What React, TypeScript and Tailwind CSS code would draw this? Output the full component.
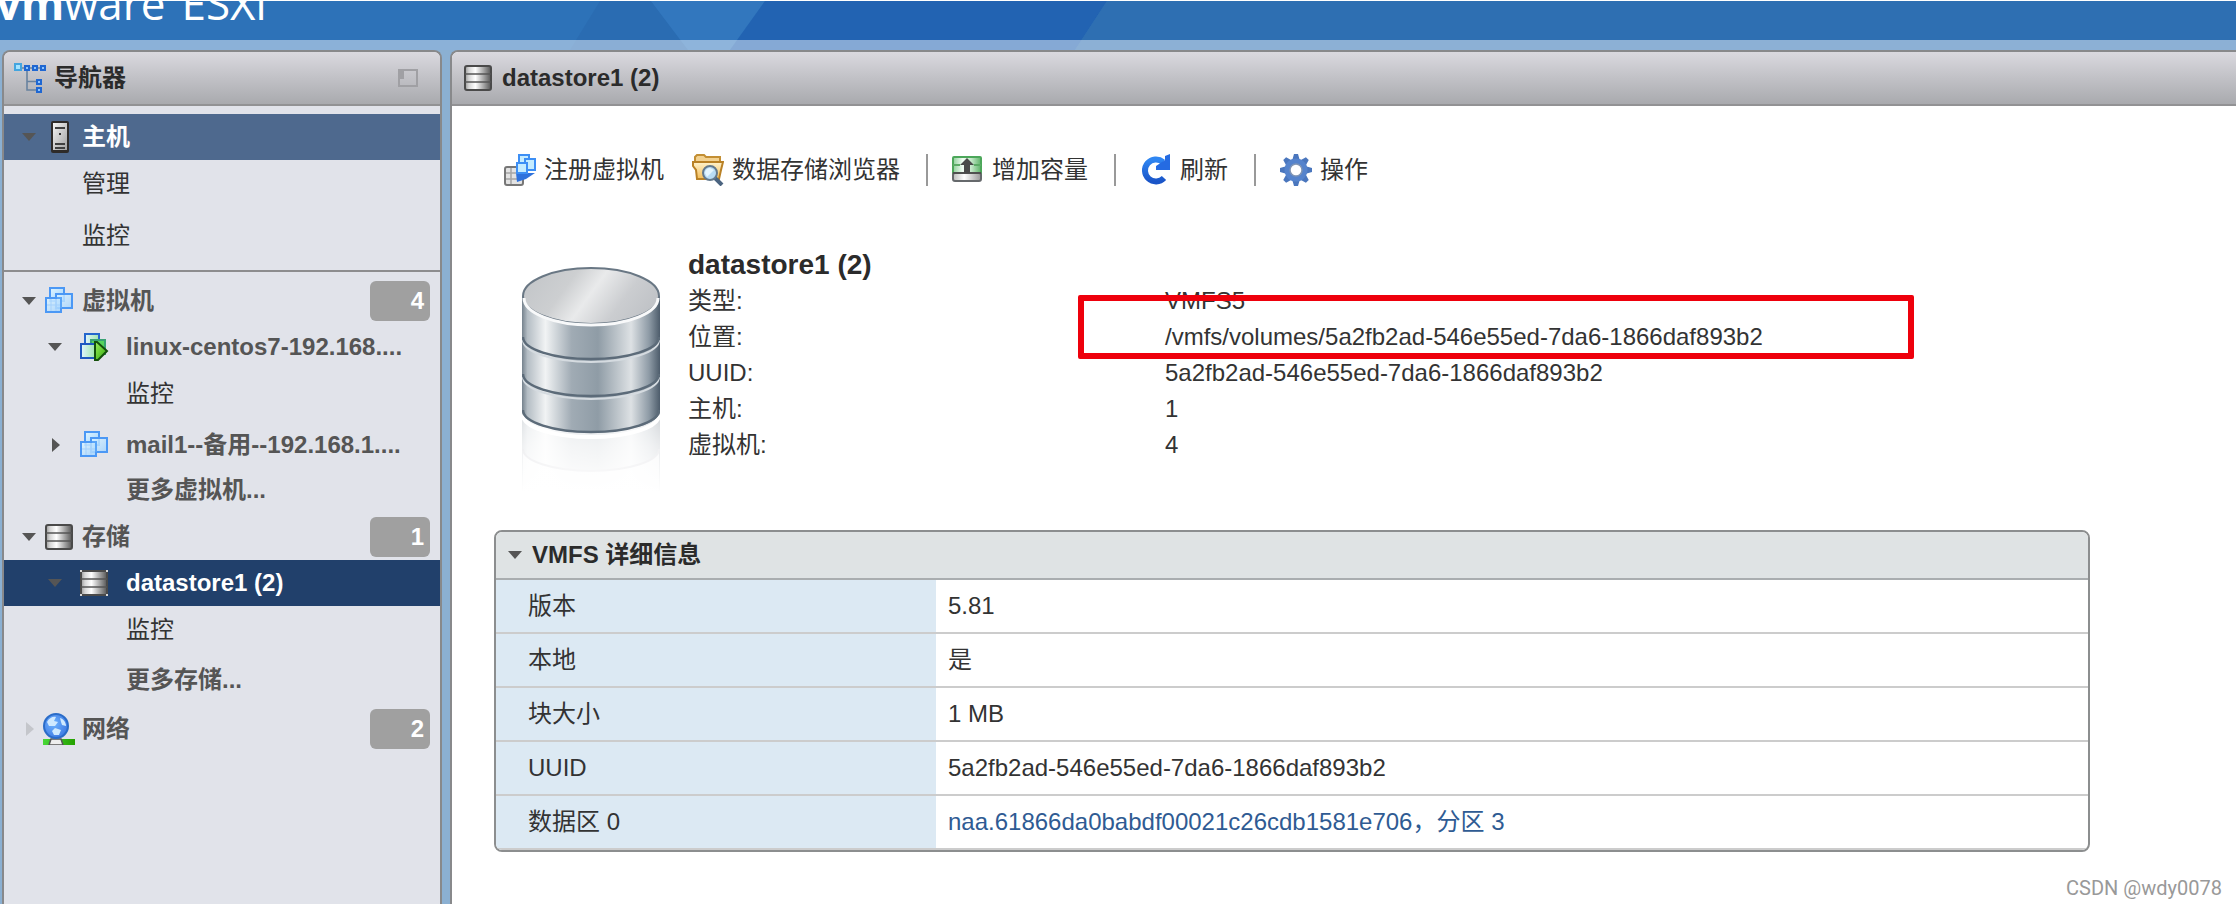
import type { ReactNode } from "react";
import clsx from "clsx";

type IconProps = { className?: string };

function ArrowDown({ className }: IconProps) {
  return (
    <svg viewBox="0 0 14 8" className={clsx("h-2 w-3.5 shrink-0", className)} aria-hidden="true">
      <path d="M0 0H14L7 8Z" fill="currentColor" />
    </svg>
  );
}

function ArrowRight({ className }: IconProps) {
  return (
    <svg viewBox="0 0 14 14" className={clsx("size-3.5 shrink-0", className)} aria-hidden="true">
      <path d="M4 0L12 7L4 14Z" fill="currentColor" />
    </svg>
  );
}

function NavigatorIcon() {
  return (
    <svg viewBox="0 0 32 30" className="h-[30px] w-8" fill="none" aria-hidden="true">
      <path d="M13 7V27H22M13 18.5H22M8 5H28" stroke="#68829f" strokeWidth="1.6" />
      <rect x="1" y="1" width="6" height="6" fill="#a5e4ff" stroke="#43a5df" strokeWidth="2" />
      <g fill="#8cc4ff" stroke="#1f67d2" strokeWidth="2">
        <rect x="11" y="3" width="4" height="4" />
        <rect x="19" y="3" width="4" height="4" />
        <rect x="27" y="3" width="4" height="4" />
        <rect x="23" y="17" width="4" height="4" />
        <rect x="23" y="25" width="4" height="4" />
      </g>
    </svg>
  );
}

function HostIcon() {
  return (
    <svg viewBox="0 0 32 32" className="size-8" aria-hidden="true">
      <defs>
        <linearGradient id="host" x1="0" x2="1" y1="0" y2="1">
          <stop offset="0" stopColor="#f4f4f4" />
          <stop offset="1" stopColor="#a2a2a2" />
        </linearGradient>
      </defs>
      <rect x="8" y="0" width="18" height="32" rx="2" fill="#2e2b29" />
      <rect x="10" y="2" width="14" height="27" fill="url(#host)" />
      <path d="M12 7H22M12 23H22M12 27H22" stroke="#3f3f3f" strokeWidth="2" />
      <rect x="16" y="12" width="2" height="2" fill="#333" />
    </svg>
  );
}

function VmIcon() {
  return (
    <svg viewBox="0 0 32 32" className="size-8" aria-hidden="true">
      <defs>
        <linearGradient id="vm" x1="0" x2="1" y1="0" y2="1">
          <stop offset="0" stopColor="#dff5ff" />
          <stop offset="1" stopColor="#9fd2ff" />
        </linearGradient>
      </defs>
      <g fill="url(#vm)" stroke="#4b98f5" strokeWidth="2">
        <rect x="7" y="3" width="14" height="13" />
        <rect x="13" y="9" width="16" height="14" fillOpacity="0.8" />
        <rect x="3" y="13" width="15" height="14" fillOpacity="0.85" />
      </g>
      <path d="M14 13H18V23" stroke="#5aa5f8" strokeWidth="2" fill="none" />
      <path d="M8 14V26M13 14V26M4 20H17" stroke="#a3d0fb" strokeWidth="1" fill="none" />
    </svg>
  );
}

function VmRunningIcon() {
  return (
    <svg viewBox="0 0 32 32" className="size-8" aria-hidden="true">
      <defs>
        <linearGradient id="vm-on" x1="0" x2="1">
          <stop offset="0" stopColor="#e2f4ff" />
          <stop offset="1" stopColor="#9fe6ac" />
        </linearGradient>
        <linearGradient id="vm-play" x1="0" x2="1" y1="0" y2="1">
          <stop offset="0" stopColor="#9cf05a" />
          <stop offset="1" stopColor="#2fa80c" />
        </linearGradient>
      </defs>
      <rect x="7" y="3" width="14" height="14" fill="url(#vm-on)" stroke="#2466cd" strokeWidth="2" />
      <rect x="13" y="9" width="14" height="14" fill="#55d35c" stroke="#38a273" strokeWidth="2" />
      <rect x="3" y="13" width="14" height="14" fill="url(#vm-on)" stroke="#1f58c0" strokeWidth="2" />
      <path d="M17 11H19L29 20L20 29H17Z" fill="url(#vm-play)" stroke="#14500c" strokeWidth="2" />
    </svg>
  );
}

function StorageIcon({ light }: { light?: boolean }) {
  return (
    <svg viewBox="0 0 32 32" className="size-8" aria-hidden="true">
      <defs>
        <linearGradient id="disk" x1="0" x2="1">
          <stop offset="0" stopColor="#999" />
          <stop offset="0.15" stopColor="#d5d5d5" />
          <stop offset="0.4" stopColor="#fff" />
          <stop offset="0.7" stopColor="#aaa" />
          <stop offset="1" stopColor="#555" />
        </linearGradient>
      </defs>
      <rect x="3" y="4" width="26" height="24" rx={light ? 0 : 2} fill="url(#disk)" stroke="#4a4a4a" strokeWidth="2" />
      <path d="M3 12H29M3 20H29" stroke="#555" strokeWidth="1.6" />
      {light && (
        <g fill="#d8d8d8">
          <rect x="2" y="3" width="2" height="2" />
          <rect x="28" y="3" width="2" height="2" />
          <rect x="2" y="27" width="2" height="2" />
          <rect x="28" y="27" width="2" height="2" />
        </g>
      )}
    </svg>
  );
}

function NetworkIcon() {
  return (
    <svg viewBox="0 0 32 32" className="size-8" aria-hidden="true">
      <defs>
        <radialGradient id="globe" cx="0.4" cy="0.4" r="0.7">
          <stop offset="0" stopColor="#6fb4ff" />
          <stop offset="1" stopColor="#3a74e0" />
        </radialGradient>
        <linearGradient id="cable" x1="0" x2="1">
          <stop offset="0" stopColor="#48d838" />
          <stop offset="1" stopColor="#25a000" />
        </linearGradient>
      </defs>
      <rect x="0" y="26" width="32" height="6" fill="url(#cable)" />
      <path d="M6 32L8 26H18L20 32Z" fill="#eee" stroke="#555" strokeWidth="1.5" />
      <circle cx="13" cy="13" r="12" fill="url(#globe)" stroke="#2a6cc8" strokeWidth="2" />
      <path d="M4 9C6 5 10 3 13 4L11 8L15 9L12 13L6 13ZM17 5C21 6 23 10 23 13L19 12L18 9ZM12 15L18 17L16 22L11 22L9 18Z" fill="#cfe9ff" />
    </svg>
  );
}

function RegisterVmIcon() {
  return (
    <svg viewBox="0 0 32 32" className="size-8" aria-hidden="true">
      <rect x="1" y="13" width="18" height="18" rx="2" fill="#e3e3e3" stroke="#777" strokeWidth="2" />
      <path d="M2 19H18M2 25H18M7 14V30" stroke="#a5a5a5" strokeWidth="1.5" />
      <path d="M12 19H31L22 25L13 28Z" fill="#2f72dc" />
      <g fill="#c5ecff" stroke="#3d8ff5" strokeWidth="2">
        <rect x="15" y="1" width="10" height="9" />
        <rect x="21" y="5" width="10" height="11" />
        <rect x="13" y="9" width="10" height="10" />
      </g>
    </svg>
  );
}

function BrowserIcon() {
  return (
    <svg viewBox="0 0 32 32" className="size-8" aria-hidden="true">
      <defs>
        <linearGradient id="folder" x1="0" x2="0" y1="0" y2="1">
          <stop offset="0" stopColor="#fff3cd" />
          <stop offset="1" stopColor="#f4bd58" />
        </linearGradient>
      </defs>
      <path d="M3 9V3L5 1H12L14 3H28V9" fill="#f3d291" stroke="#c38f34" strokeWidth="2" />
      <path d="M1 8H31L29 16L27 25H5L4 16L1 12Z" fill="url(#folder)" stroke="#b98126" strokeWidth="2" />
      <path d="M23 24L30 31" stroke="#4b6480" strokeWidth="4" />
      <circle cx="18" cy="19" r="7" fill="#b9dcf5" stroke="#64798c" strokeWidth="2" />
      <path d="M13 19A5 5 0 0 1 18 14L22 16L15 23Z" fill="#e4f5ff" />
    </svg>
  );
}

function IncreaseIcon() {
  return (
    <svg viewBox="0 0 32 32" className="size-8" aria-hidden="true">
      <defs>
        <linearGradient id="inc" x1="0" x2="1">
          <stop offset="0" stopColor="#8fd09a" />
          <stop offset="0.35" stopColor="#f2fcf4" />
          <stop offset="0.65" stopColor="#c5e8ca" />
          <stop offset="1" stopColor="#5db468" />
        </linearGradient>
        <linearGradient id="inc-base" x1="0" x2="1">
          <stop offset="0" stopColor="#bbb" />
          <stop offset="0.4" stopColor="#fff" />
          <stop offset="1" stopColor="#999" />
        </linearGradient>
      </defs>
      <rect x="1" y="3" width="28" height="18" rx="1" fill="url(#inc)" stroke="#4ca75a" strokeWidth="2" />
      <path d="M1 11H8M22 11H29" stroke="#5cab66" strokeWidth="2" />
      <rect x="1" y="19" width="28" height="8" rx="2" fill="url(#inc-base)" stroke="#66696c" strokeWidth="2" />
      <path d="M1 19H29" stroke="#505050" strokeWidth="2" />
      <path d="M15 4L22 11H18V19H12V11H8Z" fill="#4a4a4a" />
    </svg>
  );
}

function RefreshIcon() {
  return (
    <svg viewBox="0 0 32 32" className="size-8" fill="none" aria-hidden="true">
      <defs>
        <linearGradient id="refresh" x1="0" x2="0" y1="0" y2="1">
          <stop offset="0" stopColor="#2f86f2" />
          <stop offset="1" stopColor="#1a55c8" />
        </linearGradient>
      </defs>
      <path d="M24 24A11 11 0 1 1 23 8" stroke="url(#refresh)" strokeWidth="6" />
      <path d="M30 0V16H16V12L25 6V2Z" fill="#256be2" />
    </svg>
  );
}

const teeth = [0, 45, 90, 135, 180, 225, 270, 315];

function GearIcon() {
  return (
    <svg viewBox="0 0 32 32" className="size-8" aria-hidden="true">
      <g fill="#4a76bd">
        {teeth.map((deg) => (
          <path key={deg} d="M12 7L14 0H18L20 7Z" transform={`rotate(${deg} 16 16)`} />
        ))}
      </g>
      <circle cx="16" cy="16" r="8.5" fill="#fff" stroke="#5583cc" strokeWidth="6" />
      <circle cx="16" cy="16" r="6" fill="#fff" stroke="#8095b5" strokeWidth="1.5" />
    </svg>
  );
}

function DatastoreArt() {
  return (
    <svg viewBox="0 0 138 226" className="h-[226px] w-[138px] shrink-0" role="img" aria-label="datastore">
      <defs>
        <linearGradient id="side" x1="0" x2="1">
          <stop offset="0" stopColor="#75828d" />
          <stop offset="0.04" stopColor="#b4bdc4" />
          <stop offset="0.17" stopColor="#f1f3f4" />
          <stop offset="0.36" stopColor="#a0abb4" />
          <stop offset="0.55" stopColor="#8f9ca6" />
          <stop offset="0.79" stopColor="#dde1e4" />
          <stop offset="0.92" stopColor="#8e9ba6" />
          <stop offset="1" stopColor="#4d5c6b" />
        </linearGradient>
        <linearGradient id="lid" x1="0" x2="1" y1="0.3" y2="0.6">
          <stop offset="0" stopColor="#c3c6c9" />
          <stop offset="0.3" stopColor="#cdcfd1" />
          <stop offset="0.5" stopColor="#e9eaeb" />
          <stop offset="0.75" stopColor="#cbcdd0" />
          <stop offset="1" stopColor="#bfc2c6" />
        </linearGradient>
        <linearGradient id="fade" x1="0" x2="0" y1="0" y2="1">
          <stop offset="0" stopColor="#fff" stopOpacity="0.72" />
          <stop offset="0.45" stopColor="#fff" stopOpacity="0.88" />
          <stop offset="1" stopColor="#fff" />
        </linearGradient>
      </defs>
      <path d="M0 144V224H138V144Z" fill="url(#side)" />
      <path d="M1 182A68 22 0 0 0 137 182V226H1Z" fill="#fff" fillOpacity="0.75" />
      <path d="M1 182A68 22 0 0 0 137 182" fill="none" stroke="#778" strokeWidth="2" />
      <rect x="0" y="140" width="138" height="86" fill="url(#fade)" />
      <path d="M1 148A68 22 0 0 0 137 148" fill="none" stroke="#fff" strokeWidth="4" />
      <path d="M0 29V144A69 22 0 0 0 138 144V29Z" fill="url(#side)" />
      <g fill="none">
        <path d="M1 73A68 22 0 0 0 137 73M1 110A68 22 0 0 0 137 110" stroke="#d5dbe0" strokeWidth="2" />
        <path d="M1 70A68 22 0 0 0 137 70M1 107A68 22 0 0 0 137 107M1 143A68 22 0 0 0 137 143" stroke="#5c6b79" strokeWidth="2.4" />
      </g>
      <ellipse cx="69" cy="29" rx="68" ry="28" fill="url(#lid)" stroke="#697784" strokeWidth="2" />
      <path d="M2 31A67 27 0 0 0 136 31" fill="none" stroke="#f8f9fa" strokeWidth="3" />
    </svg>
  );
}

type RowProps = {
  level?: 1 | 2;
  icon: ReactNode;
  label: string;
  arrow?: "down" | "right" | "faded";
  count?: number;
  className?: string;
};

function TreeRow({ level = 1, icon, label, arrow = "down", count, className = "text-[#555]" }: RowProps) {
  return (
    <a
      href="#"
      className={clsx(
        "flex h-[46px] items-center pr-2.5 font-bold",
        level === 1 ? "gap-[7px] pl-[18px]" : "gap-4 pl-11",
        className
      )}
    >
      {arrow === "down" && <ArrowDown className="text-[#555]" />}
      {arrow === "right" && <ArrowRight className="text-[#555]" />}
      {arrow === "faded" && <ArrowRight className="text-[#c4c6cb]" />}
      <span className="shrink-0">{icon}</span>
      <span className="whitespace-nowrap">{label}</span>
      {count !== undefined && (
        <span className="ml-auto h-10 w-[60px] rounded-md bg-[#a0a0a0] pr-1.5 text-right leading-10 text-white">
          {count}
        </span>
      )}
    </a>
  );
}

function SubItem({ label, level = 1 }: { label: string; level?: 1 | 2 }) {
  return (
    <a
      href="#"
      className={clsx("flex h-[52px] items-center pb-1 text-[#333]", level === 1 ? "pl-[78px]" : "pl-[122px]")}
    >
      {label}
    </a>
  );
}

function MoreItem({ label }: { label: string }) {
  return (
    <a href="#" className="flex h-[46px] items-center pb-0.5 pl-[122px] font-bold text-[#555]">
      {label}
    </a>
  );
}

function ToolButton({ icon, label }: { icon: ReactNode; label: string }) {
  return (
    <button type="button" className="flex h-8 items-center gap-2 whitespace-nowrap">
      {icon}
      {label}
    </button>
  );
}

function Separator() {
  return <div className="mr-6 ml-[26px] h-8 w-0.5 bg-[#999]" />;
}

const summary = [
  { label: "类型:", value: "VMFS5" },
  { label: "位置:", value: "/vmfs/volumes/5a2fb2ad-546e55ed-7da6-1866daf893b2" },
  { label: "UUID:", value: "5a2fb2ad-546e55ed-7da6-1866daf893b2" },
  { label: "主机:", value: "1" },
  { label: "虚拟机:", value: "4" },
];

const details = [
  { label: "版本", value: "5.81" },
  { label: "本地", value: "是" },
  { label: "块大小", value: "1 MB" },
  { label: "UUID", value: "5a2fb2ad-546e55ed-7da6-1866daf893b2" },
  { label: "数据区 0", value: "naa.61866da0babdf00021c26cdb1581e706，分区 3", link: true },
];

const panelHeader =
  "flex h-[54px] items-center border-b-2 border-[#929294] bg-linear-to-b from-[#dad9df] to-[#a9aaae] font-bold text-[#2b2b2b]";

export default function App() {
  return (
    <div className="relative flex min-h-screen flex-col overflow-hidden bg-[#8bb0d2] font-['Liberation_Sans','Noto_Sans_CJK_SC',sans-serif] text-2xl leading-9 text-[#333]">
      <header className="relative h-[50px] overflow-hidden border-t border-white bg-[#2d72b8]">
        <svg className="absolute inset-0 h-full w-full" aria-hidden="true">
          <path d="M600 0H651L688 49H570Z" fill="#2a6cb2" />
          <path d="M651 0H765L730 49H688Z" fill="#3277be" />
          <path d="M765 0H1107L1075 49H730Z" fill="#2263b2" />
          <path d="M1107 0H3000V49H1075Z" fill="#2e6fb2" />
          <rect y="39" width="100%" height="10" fill="#fff" fillOpacity="0.45" />
        </svg>
        <div className="relative -mt-7 -ml-1 flex gap-4 font-['Open_Sans',sans-serif] text-[44px] leading-[60px] text-white">
          <span>
            <b>vm</b>ware
          </span>
          <span>ESXi</span>
        </div>
      </header>

      <div className="flex flex-1 gap-2 pl-0.5">
        <nav className="w-[440px] shrink-0 overflow-hidden rounded-t-lg border-2 border-b-0 border-[#88898b] bg-[#e1e3ea]">
          <div className={clsx(panelHeader, "pr-[22px] pl-2.5")}>
            <NavigatorIcon />
            <h2 className="ml-2">导航器</h2>
            <button type="button" aria-label="折叠" className="ml-auto">
              <svg viewBox="0 0 20 18" className="h-[18px] w-5" aria-hidden="true">
                <rect x="1" y="1" width="18" height="16" fill="none" stroke="#a0a0a4" strokeWidth="2" />
                <rect x="1" y="1" width="5" height="9" fill="#a0a0a4" />
              </svg>
            </button>
          </div>

          <div className="border-b-2 border-[#8d8d8f] pt-2 pb-1.5">
            <TreeRow icon={<HostIcon />} label="主机" className="bg-[#4e698e] text-white" />
            <SubItem label="管理" />
            <SubItem label="监控" />
          </div>

          <div className="pt-1.5">
            <TreeRow icon={<VmIcon />} label="虚拟机" count={4} />
            <TreeRow level={2} icon={<VmRunningIcon />} label="linux-centos7-192.168...." />
            <SubItem level={2} label="监控" />
            <TreeRow level={2} icon={<VmIcon />} label="mail1--备用--192.168.1...." arrow="right" />
            <MoreItem label="更多虚拟机..." />
            <TreeRow icon={<StorageIcon />} label="存储" count={1} />
            <TreeRow level={2} icon={<StorageIcon light />} label="datastore1 (2)" className="bg-[#21406b] text-white" />
            <SubItem level={2} label="监控" />
            <MoreItem label="更多存储..." />
          </div>
          <div className="pt-0.5">
            <TreeRow icon={<NetworkIcon />} label="网络" arrow="faded" count={2} />
          </div>
        </nav>

        <main className="min-w-0 flex-1 overflow-hidden rounded-tl-lg border-t-2 border-l-2 border-[#88898b] bg-white">
          <div className={clsx(panelHeader, "gap-2 pl-2.5")}>
            <StorageIcon />
            <h1>datastore1 (2)</h1>
          </div>

          <div className="px-[42px] pt-12">
            <div className="flex items-center pl-2.5">
              <ToolButton icon={<RegisterVmIcon />} label="注册虚拟机" />
              <div className="w-7" />
              <ToolButton icon={<BrowserIcon />} label="数据存储浏览器" />
              <Separator />
              <ToolButton icon={<IncreaseIcon />} label="增加容量" />
              <Separator />
              <ToolButton icon={<RefreshIcon />} label="刷新" />
              <Separator />
              <ToolButton icon={<GearIcon />} label="操作" />
            </div>

            <section className="mt-[61px] flex gap-7 pl-7">
              <div className="-mb-8 pt-5">
                <DatastoreArt />
              </div>
              <div className="flex-1">
                <h2 className="text-[28px] leading-9 font-bold text-[#2b2b2b]">datastore1 (2)</h2>
                <dl className="relative">
                  {summary.map((row) => (
                    <div key={row.label} className="flex">
                      <dt className="w-[477px] shrink-0">{row.label}</dt>
                      <dd>{row.value}</dd>
                    </div>
                  ))}
                  <div className="pointer-events-none absolute top-3 left-[390px] h-16 w-[836px] rounded-xs border-[6px] border-[#ee000c]" />
                </dl>
              </div>
            </section>

            <section className="mt-[67px] max-w-[1596px] overflow-hidden rounded-lg border-2 border-[#8c8e8f]">
              <button
                type="button"
                className="flex h-12 w-full items-center gap-2.5 border-b-2 border-[#a9adaf] bg-[#dfe3e4] pl-3 font-bold text-[#2b2b2b]"
              >
                <ArrowDown className="text-[#555]" />
                VMFS 详细信息
              </button>
              <table className="w-full border-separate border-spacing-0">
                <tbody>
                  {details.map((row) => (
                    <tr key={row.label} className="h-[54px]">
                      <th className="w-[440px] border-b-2 border-[#ccc] bg-[#dce9f3] pl-8 text-left font-normal">
                        {row.label}
                      </th>
                      <td className="border-b-2 border-[#ccc] pl-3">
                        {row.link ? (
                          <a href="#" className="text-[#2f5b93]">
                            {row.value}
                          </a>
                        ) : (
                          row.value
                        )}
                      </td>
                    </tr>
                  ))}
                </tbody>
              </table>
            </section>
          </div>
        </main>
      </div>

      <div className="absolute right-3.5 bottom-0.5 font-['Roboto',sans-serif] text-xl text-[#999]">CSDN @wdy0078</div>
    </div>
  );
}
